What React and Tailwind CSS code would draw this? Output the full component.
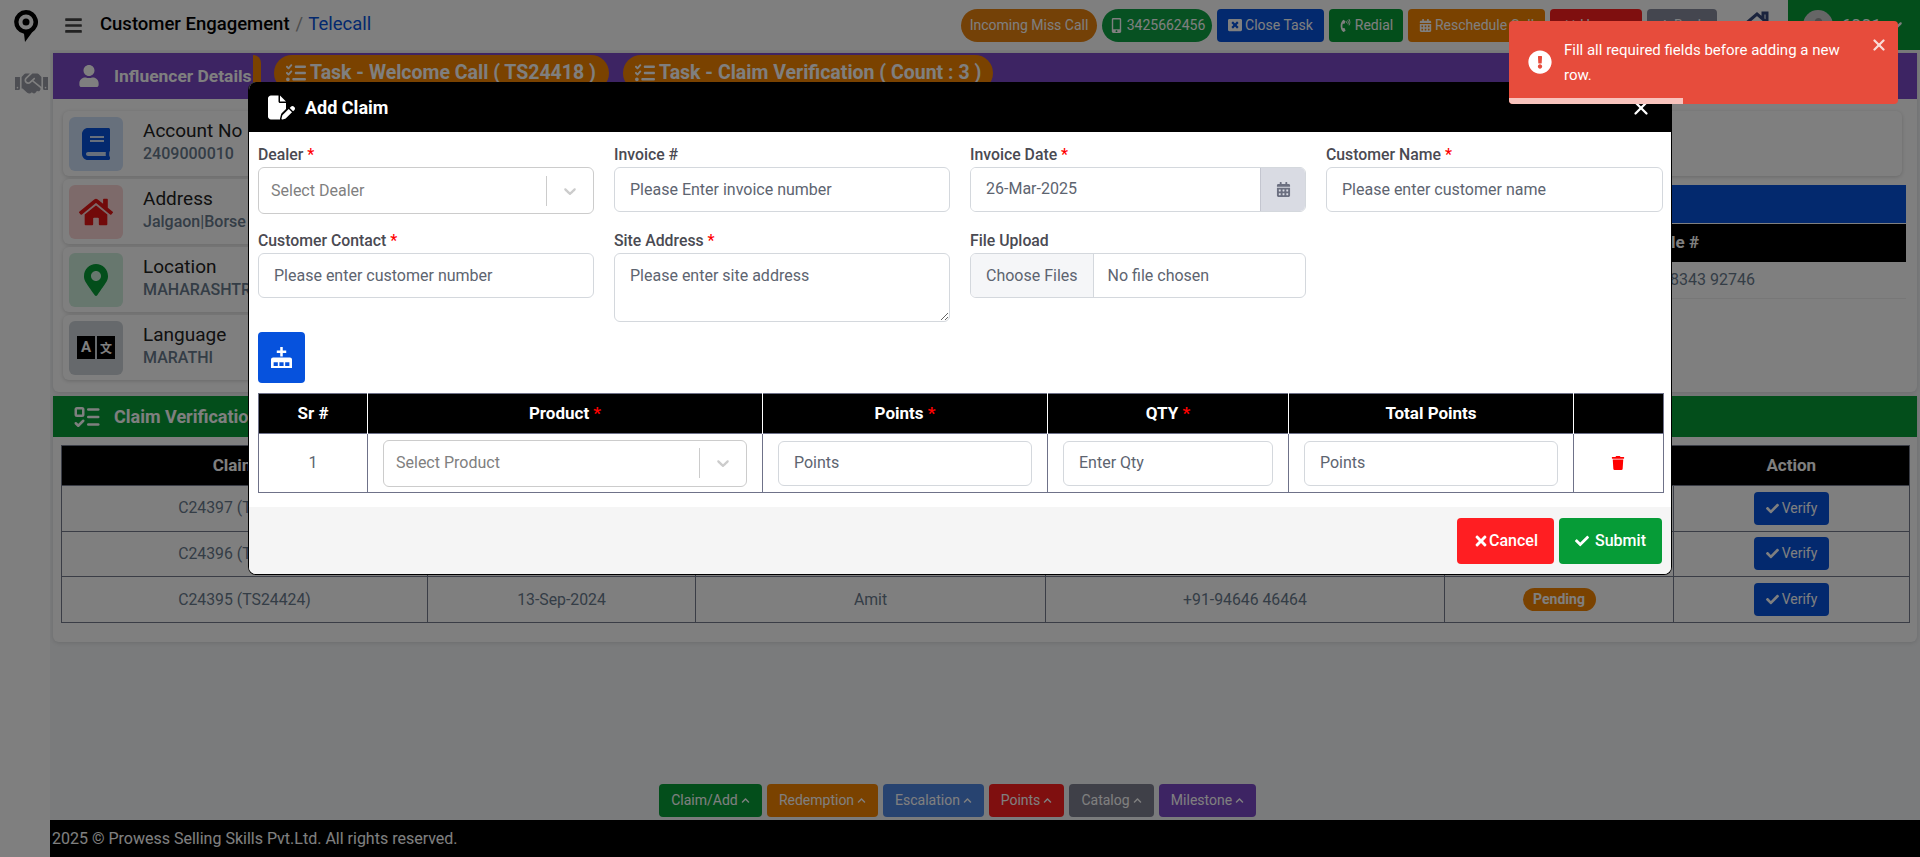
import React from "react";
import { FaBars, FaHandshake, FaUser, FaBook, FaHome, FaMapMarkerAlt, FaTrash, FaTimes, FaCheck, FaCalendarAlt, FaMobileAlt, FaWindowClose, FaPhoneVolume, FaChevronUp, FaExclamationCircle, FaArrowLeft } from "react-icons/fa";
import { FaFilePen, FaListCheck } from "react-icons/fa6";
import { LuListTodo, LuX } from "react-icons/lu";

const Chevron = ({ c = "#cccccc" }) => (
  <svg viewBox="0 0 20 20" width="20" height="20" fill={c}>
    <path d="M4.516 7.548c0.436-0.446 1.043-0.481 1.576 0l3.908 3.747 3.908-3.747c0.533-0.481 1.141-0.446 1.574 0 0.436 0.445 0.408 1.197 0 1.615-0.406 0.418-4.695 4.502-4.695 4.502-0.217 0.223-0.502 0.335-0.787 0.335s-0.57-0.112-0.789-0.335c0 0-4.287-4.084-4.695-4.502s-0.436-1.17 0-1.615z" />
  </svg>
);

const Logo = () => (
  <svg viewBox="0 0 24 32" width="24" height="32" className="block text-black">
    <path fill="currentColor" fillRule="evenodd" d="M12 0a12 12 0 0 1 6 22.400l-7 9.600-1-8.200A12 12 0 0 1 12 0zm0 4.500a7.500 7.500 0 1 0 0 15 7.500 7.500 0 0 0 0-15z" />
    <circle cx="12" cy="12" r="3.500" fill="currentColor" />
  </svg>
);

const Req = () => <span className="text-[#ff0000]"> *</span>;

const Field = ({ label, req, children }) => (
  <div className="flex flex-col">
    <label className="h-[21px] mb-[2px] leading-[22px] text-[15.800px] font-medium text-[#4a4a52]">
      {label}
      {req && <Req />}
    </label>
    {children}
  </div>
);

const inputCls = "block w-full h-[45px] px-[15px] pb-[1px] rounded-[6px] border border-[#d4d8dd] bg-white text-[16px] text-[#5d6470] placeholder:text-[#5d6470] outline-none";

const SelectBox = ({ text }) => (
  <div className="flex items-center w-full h-[47px] pl-[12px] pr-[13px] rounded-[6px] border border-[#cccccc] bg-white text-left">
    <span className="flex-1 text-[16px] text-[#808080]">{text}</span>
    <span className="w-px h-[30px] bg-[#cccccc] mr-[13px]" />
    <Chevron />
  </div>
);

const TopBtn = ({ className, children }) => (
  <div className={`flex items-center justify-center gap-[3px] h-[33px] text-[14px] text-white ${className}`}>{children}</div>
);

const InfoCard = ({ bg, icon, title, value }) => (
  <div className="flex items-center h-[65px] rounded-[6px] bg-white shadow-[0_1px_4px_rgba(0,0,0,0.18)] pl-[6px]">
    <div className={`flex items-center justify-center w-[54px] h-[54px] rounded-[6px] ${bg}`}>{icon}</div>
    <div className="ml-[20px] -mt-[4px]">
      <div className="text-[19px] leading-[24px] text-[#222222]">{title}</div>
      <div className="text-[16px] leading-[22px] font-medium text-[#697a8d]">{value}</div>
    </div>
  </div>
);

const Verify = () => (
  <div className="inline-flex items-center justify-center gap-[3px] w-[75px] h-[33px] rounded-[4px] bg-[#0652dd] text-[14px] text-white align-middle">
    <FaCheck size={13} /> Verify
  </div>
);

const claimRows = [
  ["C24397 (TS24426)", "13-Sep-2024", "Amit", "+91-94646 46464", "Pending"],
  ["C24396 (TS24425)", "13-Sep-2024", "Amit", "+91-94646 46464", "Pending"],
  ["C24395 (TS24424)", "13-Sep-2024", "Amit", "+91-94646 46464", "Pending"],
];

const Dock = ({ className, children }) => (
  <div className={`flex items-center justify-center gap-[3px] h-[33px] rounded-[4px] text-[14px] text-white ${className}`}>
    {children}
    <FaChevronUp size={9} />
  </div>
);

export default function App() {
  return (
    <div className="relative flex flex-col w-[1920px] h-[857px] overflow-hidden bg-white font-[Roboto,sans-serif]">
      {/* Header */}
      <header className="flex items-center h-[50px] shrink-0 bg-white">
        <div className="ml-[14px] w-[24px] mt-[1px]"><Logo /></div>
        <FaBars size={19} className="ml-[26px] text-[#444444]" />
        <div className="ml-[17px] text-[18.500px] font-medium text-black">Customer Engagement</div>
        <div className="ml-[6px] text-[18.500px] text-[#9a9a9a]">/</div>
        <div className="ml-[5px] text-[18.500px] text-[#0652dd]">Telecall</div>
        <div className="ml-auto flex items-center gap-[5px]">
          <TopBtn className="w-[136px] rounded-full bg-[#e8820f]">Incoming Miss Call</TopBtn>
          <TopBtn className="w-[110px] rounded-full bg-[#0ea345]"><FaMobileAlt size={15} />3425662456</TopBtn>
          <TopBtn className="w-[107px] rounded-[4px] bg-[#0652dd]"><FaWindowClose size={14} />Close Task</TopBtn>
          <TopBtn className="w-[74px] rounded-[4px] bg-[#069c37]"><FaPhoneVolume size={13} />Redial</TopBtn>
          <TopBtn className="w-[137px] rounded-[4px] bg-[#f58400]"><FaCalendarAlt size={13} />Reschedule Call</TopBtn>
          <TopBtn className="w-[92px] rounded-[4px] bg-[#fe1e1e]"><FaTimes size={14} />Hangup</TopBtn>
          <TopBtn className="w-[70px] rounded-[4px] bg-[#888c9e]"><FaArrowLeft size={12} />Back</TopBtn>
        </div>
        <svg viewBox="0 0 32 32" width="32" height="32" fill="none" stroke="#34467a" strokeWidth="3" className="ml-[24px]">
          <path d="M2 17 16 5l14 12M6 15v14h20V15M22 9V4h4v9" />
        </svg>
        <div className="ml-[15px] flex items-center h-full w-[132px] bg-[#069c37] text-white">
          <div className="ml-[15px] flex items-center justify-center w-[30px] h-[30px] rounded-full bg-[#cccccc] text-[#999999]"><FaUser size={15} /></div>
          <span className="ml-[8px] text-[18px]">6001</span>
          <span className="ml-[5px]"><Chevron c="#ffffff" /></span>
        </div>
      </header>

      <div className="flex flex-1 min-h-0">
        {/* Sidebar */}
        <aside className="flex flex-col items-center w-[50px] shrink-0 bg-white pt-[17px] pl-[12px]">
          <FaHandshake size={33} className="shrink-0 text-[#9a9ca6]" />
        </aside>

        {/* Main */}
        <main className="flex flex-col flex-1 min-w-0 bg-[#f4f6f8]">
          <div className="flex-1 pl-[3px] pr-[3px] pt-[3px]">
            <section className="h-[339px] rounded-b-[6px] bg-white shadow-[0_1px_4px_rgba(0,0,0,0.12)] overflow-hidden">
              <div className="flex items-center h-[46px] bg-[#7a48c6] text-white">
                <FaUser size={22} className="ml-[25px]" />
                <span className="ml-[14px] w-[139px] whitespace-nowrap text-[17.400px] font-bold">Influencer Details</span>
                <span className="w-[8px] h-[36px] -mt-[6px] rounded-r-full bg-[#f58400]" />
                <div className="ml-[13px] flex items-center gap-[4px] w-[335px] h-[36px] -mt-[6px] pl-[12px] rounded-full bg-[#f58400] text-[19.500px] font-bold whitespace-nowrap">
                  <FaListCheck size={20} />Task - Welcome Call ( TS24418 )
                </div>
                <div className="ml-[14px] flex items-center gap-[4px] w-[370px] h-[36px] -mt-[6px] pl-[12px] rounded-full bg-[#f58400] text-[19.500px] font-bold whitespace-nowrap">
                  <FaListCheck size={20} />Task - Claim Verification ( Count : 3 )
                </div>
              </div>
              <div className="flex pl-[10px] pr-[11px] pt-[12px]">
                <div className="flex flex-col gap-[3px] w-[560px]">
                  <InfoCard bg="bg-[#cfe0f8]" icon={<FaBook size={32} className="text-[#0652dd]" />} title="Account No" value="2409000010" />
                  <InfoCard bg="bg-[#fbd5d5]" icon={<FaHome size={34} className="text-[#e41414]" />} title="Address" value="Jalgaon|Borse" />
                  <InfoCard bg="bg-[#cfeedd]" icon={<FaMapMarkerAlt size={32} className="text-[#069c37]" />} title="Location" value="MAHARASHTRA" />
                  <InfoCard
                    bg="bg-[#cdd2d8]"
                    title="Language"
                    value="MARATHI"
                    icon={
                      <span className="flex gap-[2px]">
                        <span className="flex items-center justify-center w-[18px] h-[23px] bg-black text-[15px] font-bold leading-none text-white">A</span>
                        <span className="flex items-center justify-center w-[18px] h-[23px] bg-black text-[12px] font-bold leading-none text-white font-['Noto_Sans_CJK_SC']">文</span>
                      </span>
                    }
                  />
                </div>
                <div className="flex-1 ml-[60px] flex flex-col">
                  <div className="h-[65px] mr-[4px] rounded-[6px] bg-white shadow-[0_1px_4px_rgba(0,0,0,0.18)]" />
                  <div className="mt-[9px] h-[38px] bg-[#0652dd]" />
                  <div className="mt-[1px] flex items-center justify-end h-[38px] pr-[207px] bg-black text-[17px] font-bold text-white">Mobile #</div>
                  <div className="flex items-center justify-end h-[37px] pr-[151px] border-b border-[#eeeeee] text-[16px] text-[#697a8d]">+91-98343 92746</div>
                </div>
              </div>
            </section>

            <section className="mt-[4px] h-[246px] rounded-b-[6px] bg-white shadow-[0_1px_4px_rgba(0,0,0,0.12)] overflow-hidden">
              <div className="flex items-center h-[41px] bg-[#069c37] text-white">
                <LuListTodo size={30} className="ml-[19px]" />
                <span className="ml-[12px] text-[18px] font-bold">Claim Verification</span>
              </div>
              <div className="pl-[8px] pr-[8px] pt-[8px]">
                <table className="w-[1848px] table-fixed border-collapse border border-[#757a8c] text-center text-[15.800px] text-[#697a8d]">
                  <colgroup>
                    <col className="w-[366px]" /><col className="w-[268px]" /><col className="w-[350px]" /><col className="w-[399px]" /><col className="w-[229px]" /><col className="w-[236px]" />
                  </colgroup>
                  <thead>
                    <tr className="h-[40px] bg-black text-[17px] font-bold text-white">
                      {["Claim ID", "Date", "Customer", "Contact", "Status", "Action"].map((h) => <th key={h}>{h}</th>)}
                    </tr>
                  </thead>
                  <tbody>
                    {claimRows.map((r) => (
                      <tr key={r[0]} className="h-[45.600px]">
                        {r.slice(0, 4).map((c, i) => <td key={i} className="border border-[#757a8c]">{c}</td>)}
                        <td className="border border-[#757a8c]">
                          <span className="inline-block w-[73px] h-[23px] leading-[23px] rounded-full bg-[#f58400] text-[14px] font-bold text-white">{r[4]}</span>
                        </td>
                        <td className="border border-[#757a8c]"><Verify /></td>
                      </tr>
                    ))}
                  </tbody>
                </table>
              </div>
            </section>
          </div>

          <div className="flex justify-center gap-[5px] pb-[3px] pr-[55px]">
            <Dock className="w-[103px] bg-[#069c37]">Claim/Add</Dock>
            <Dock className="w-[111px] bg-[#f58400]">Redemption</Dock>
            <Dock className="w-[101px] bg-[#4f86e0]">Escalation</Dock>
            <Dock className="w-[75px] bg-[#fe1e1e]">Points</Dock>
            <Dock className="w-[85px] bg-[#7e8090]">Catalog</Dock>
            <Dock className="w-[97px] bg-[#7a48c6]">Milestone</Dock>
          </div>
          <footer className="flex items-center h-[37px] pl-[2px] bg-black text-[16px] text-white">2025 © Prowess Selling Skills Pvt.Ltd. All rights reserved.</footer>
        </main>
      </div>

      {/* Backdrop */}
      <div className="absolute inset-0 bg-black/50" />

      {/* Modal */}
      <div className="absolute left-[248px] top-[82px] w-[1424px] h-[493px] flex flex-col rounded-[8px] border-r border-b border-l border-black bg-white overflow-hidden">
        <div className="relative flex items-center h-[50px] shrink-0 bg-black text-white">
          <FaFilePen size={27} className="ml-[19px]" />
          <span className="ml-[10px] text-[18px] font-bold">Add Claim</span>
          <LuX size={22} strokeWidth={2.500} className="absolute right-[19px] top-[15px]" />
        </div>
        <div className="flex-1 px-[9px] pt-[12px]">
          <div className="grid grid-cols-[336px_336px_336px_337px] gap-x-[20px] gap-y-[16px]">
            <Field label="Dealer" req><SelectBox text="Select Dealer" /></Field>
            <Field label="Invoice #"><input className={inputCls} placeholder="Please Enter invoice number" /></Field>
            <Field label="Invoice Date" req>
              <div className="flex h-[45px] rounded-[6px] border border-[#d4d8dd] overflow-hidden">
                <input className="flex-1 min-w-0 px-[15px] pb-[1px] bg-white text-[16px] text-[#5d6470] outline-none" defaultValue="26-Mar-2025" />
                <span className="flex items-center justify-center w-[45px] bg-[#d9dbe3] border-l border-[#c4c6d0] text-[#6b6f80]"><FaCalendarAlt size={15} /></span>
              </div>
            </Field>
            <Field label="Customer Name" req><input className={inputCls} placeholder="Please enter customer name" /></Field>
            <Field label="Customer Contact" req><input className={inputCls} placeholder="Please enter customer number" /></Field>
            <Field label="Site Address" req>
              <textarea className="block w-full h-[69px] px-[15px] py-[10px] rounded-[6px] border border-[#d4d8dd] bg-white text-[16px] text-[#5d6470] placeholder:text-[#5d6470] outline-none" placeholder="Please enter site address" />
            </Field>
            <Field label="File Upload">
              <input type="file" multiple className="block w-full h-[45px] rounded-[6px] border border-[#d4d8dd] bg-white text-[16px] text-[#5d6470] file:h-full file:mr-[14px] file:px-[15px] file:border-0 file:border-r file:border-solid file:border-[#d4d8dd] file:bg-[#f5f6f8] file:text-[16px] file:text-[#5d6470]" />
            </Field>
          </div>
          <button className="flex items-center justify-center mt-[10px] w-[47px] h-[51px] rounded-[4px] bg-[#0652dd] text-white">
            <svg viewBox="0 0 20 20" width="21" height="21" fill="currentColor">
              <path d="M8.800 0h2.400v3.300h3.300v2.400h-3.300V9H8.800V5.700H5.500V3.300h3.300z" />
              <path fillRule="evenodd" d="M2 10h16a2 2 0 0 1 2 2v8H0v-8a2 2 0 0 1 2-2zm.500 4.500v3.500h4v-3.500zm5.500 0v3.500h4v-3.500zm5.500 0v3.500h4v-3.500z" />
            </svg>
          </button>
          <table className="mt-[10px] w-[1405px] table-fixed border-collapse border border-[#6f7289] text-center text-[16px] text-[#5d6470]">
            <colgroup>
              <col className="w-[109px]" /><col className="w-[395px]" /><col className="w-[285px]" /><col className="w-[241px]" /><col className="w-[285px]" /><col className="w-[90px]" />
            </colgroup>
            <thead>
              <tr className="h-[40px] bg-black text-[17px] font-bold text-white">
                <th className="border-r border-white">Sr #</th>
                <th className="border-r border-white">Product<Req /></th>
                <th className="border-r border-white">Points<Req /></th>
                <th className="border-r border-white">QTY<Req /></th>
                <th className="border-r border-white">Total Points</th>
                <th />
              </tr>
            </thead>
            <tbody>
              <tr className="h-[59px]">
                <td className="border border-[#6f7289]">1</td>
                <td className="border border-[#6f7289] px-[15px]"><SelectBox text="Select Product" /></td>
                <td className="border border-[#6f7289] px-[15px]"><input className={inputCls} placeholder="Points" /></td>
                <td className="border border-[#6f7289] px-[15px]"><input className={inputCls} placeholder="Enter Qty" /></td>
                <td className="border border-[#6f7289] px-[15px]"><input className={inputCls} placeholder="Points" /></td>
                <td className="border border-[#6f7289] pr-[2px]"><FaTrash size={14} className="mx-auto text-[#ff0000]" /></td>
              </tr>
            </tbody>
          </table>
        </div>
        <div className="flex justify-end gap-[5px] h-[67px] shrink-0 pt-[11px] pr-[9px] bg-[#f5f5f5]">
          <button className="flex items-center justify-center w-[97px] h-[46px] rounded-[4px] bg-[#ff1e22] text-[16px] font-medium text-white"><FaTimes size={16} />Cancel</button>
          <button className="flex items-center justify-center gap-[6px] w-[103px] h-[46px] rounded-[4px] bg-[#069c37] text-[16px] font-medium text-white"><FaCheck size={14} />Submit</button>
        </div>
      </div>

      {/* Toast */}
      <div className="absolute left-[1509px] top-[21px] w-[389px] h-[83px] rounded-[4px] bg-[#e74c3c] text-white overflow-hidden">
        <div className="flex pt-[17px] pl-[19px] pr-[40px]">
          <FaExclamationCircle size={24} className="mt-[12px] shrink-0" />
          <p className="ml-[12px] text-[15px] leading-[25px]">Fill all required fields before adding a new row.</p>
        </div>
        <LuX size={18} strokeWidth={3} className="absolute right-[10px] top-[15px] opacity-80" />
        <div className="absolute left-0 bottom-0 w-[174px] h-[6px] bg-[#f8c3bd]" />
      </div>
    </div>
  );
}
